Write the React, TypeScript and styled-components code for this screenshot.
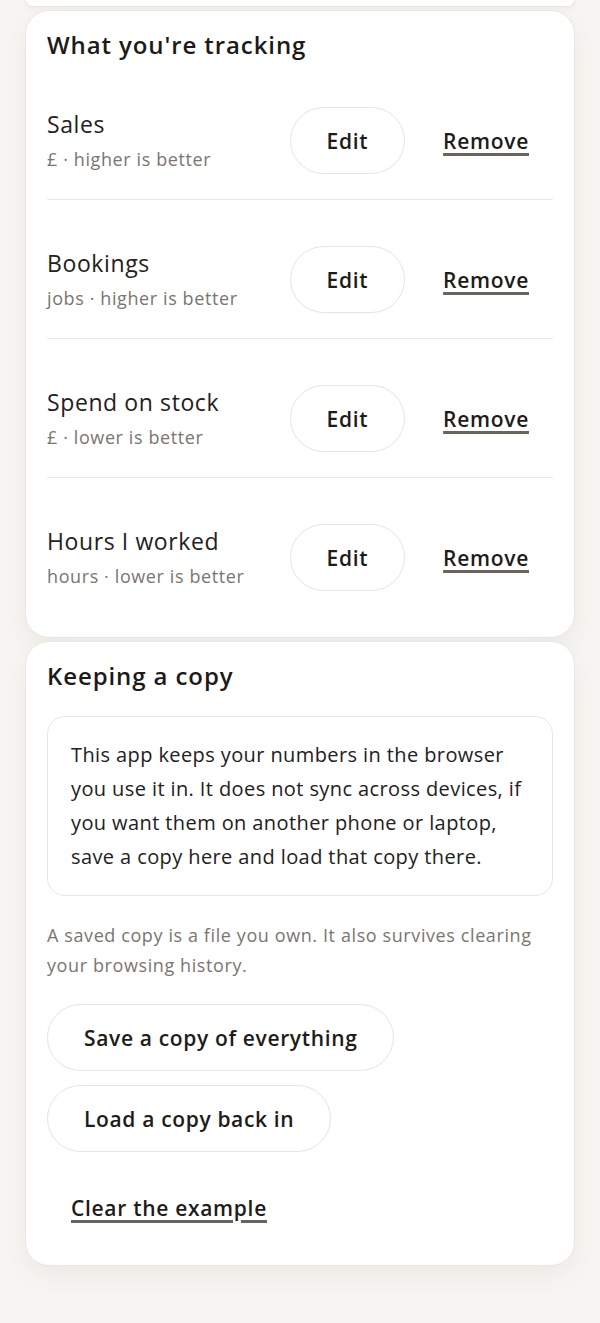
import React from 'react'
import styled, { createGlobalStyle } from 'styled-components'

const GlobalStyle = createGlobalStyle`
  html, body {
    margin: 0;
    padding: 0;
    background: #f7f5f2;
  }
  body {
    font-family: "Open Sans", "Noto Sans", "Liberation Sans", sans-serif;
    color: #221e1b;
    -webkit-font-smoothing: antialiased;
  }
  * { box-sizing: border-box; }
`

interface Metric {
  name: string
  unit: string
  better: string
}

const metrics: Metric[] = [
  { name: 'Sales', unit: '£', better: 'higher is better' },
  { name: 'Bookings', unit: 'jobs', better: 'higher is better' },
  { name: 'Spend on stock', unit: '£', better: 'lower is better' },
  { name: 'Hours I worked', unit: 'hours', better: 'lower is better' },
]

export default function App() {
  return (
    <>
      <GlobalStyle />
      <Page>
        <CardStub />
        <Card>
          <CardTitle>What you're tracking</CardTitle>
          {metrics.map((m, i) => (
            <MetricRow key={m.name} last={i === metrics.length - 1}>
              <MetricText>
                <MetricName>{m.name}</MetricName>
                <MetricMeta>
                  {m.unit} · {m.better}
                </MetricMeta>
              </MetricText>
              <PillButton>Edit</PillButton>
              <TextButton>Remove</TextButton>
            </MetricRow>
          ))}
        </Card>
        <Card bottom>
          <CardTitle>Keeping a copy</CardTitle>
          <InfoBox>
            This app keeps your numbers in the browser you use it in. It does
            not sync across devices, if you want them on another phone or
            laptop, save a copy here and load that copy there.
          </InfoBox>
          <Helper>
            A saved copy is a file you own. It also survives clearing your
            browsing history.
          </Helper>
          <ButtonStack>
            <PillButton>Save a copy of everything</PillButton>
            <PillButton>Load a copy back in</PillButton>
          </ButtonStack>
          <ClearRow>
            <TextButton>Clear the example</TextButton>
          </ClearRow>
        </Card>
      </Page>
    </>
  )
}

const Page = styled.div`
  min-height: 1323px;
  padding: 0 25px 58px;
  display: flex;
  flex-direction: column;
  gap: 3px;
`

const CardStub = styled.div`
  height: 7px;
  background: #fff;
  border: 1px solid #ece6e0;
  border-top: none;
  border-radius: 0 0 24px 24px;
  box-shadow: 0 2px 6px rgba(80, 60, 40, 0.05);
`

const Card = styled.section<{ bottom?: boolean }>`
  background: #fff;
  border: 1px solid #ece6e0;
  border-radius: 24px;
  padding: 18px 21px ${(p) => (p.bottom ? '24px' : '21px')};
  box-shadow: 0 10px 26px rgba(80, 60, 40, 0.06);
  display: flex;
  flex-direction: column;
`

const CardTitle = styled.h2`
  margin: 0;
  font-size: 24px;
  line-height: 32px;
  font-weight: 600;
  color: #1d1a17;
  letter-spacing: 0.9px;
`

const MetricRow = styled.div<{ last?: boolean }>`
  display: flex;
  align-items: center;
  gap: 14px;
  padding: 46px 0 25px;
  border-bottom: ${(p) => (p.last ? 'none' : '1px solid #ebe7e2')};
`

const MetricText = styled.div`
  flex: 1;
  display: flex;
  flex-direction: column;
  gap: 6px;
`

const MetricName = styled.div`
  font-size: 23px;
  line-height: 30px;
  font-weight: 400;
  color: #24201d;
  letter-spacing: 0.6px;
`

const MetricMeta = styled.div`
  font-size: 18px;
  line-height: 28px;
  color: #7b756f;
  letter-spacing: 0.6px;
`

const PillButton = styled.button`
  height: 67px;
  padding: 0 36px;
  border: 1.5px solid #e9e3dc;
  border-radius: 999px;
  background: #fff;
  font-family: inherit;
  font-size: 21px;
  font-weight: 600;
  color: #1f1b18;
  letter-spacing: 0.65px;
  cursor: pointer;
  white-space: nowrap;
`

const TextButton = styled.button`
  height: 67px;
  padding: 0 24px;
  border: none;
  background: transparent;
  font-family: inherit;
  font-size: 21px;
  font-weight: 600;
  color: #1f1b18;
  letter-spacing: 0.7px;
  text-decoration: underline;
  text-decoration-color: #6b645c;
  text-decoration-thickness: 3px;
  text-underline-offset: 4px;
  cursor: pointer;
  white-space: nowrap;
`

const InfoBox = styled.p`
  margin: 24px 0 0;
  padding: 21px 23px;
  border: 1.5px solid #ebe5df;
  border-radius: 18px;
  font-size: 20px;
  line-height: 34px;
  color: #24201d;
  letter-spacing: 0.4px;
`

const Helper = styled.p`
  margin: 24px 0 0;
  font-size: 18px;
  line-height: 30px;
  color: #7b756f;
  letter-spacing: 0.6px;
`

const ButtonStack = styled.div`
  margin-top: 24px;
  display: flex;
  flex-direction: column;
  align-items: flex-start;
  gap: 14px;
`

const ClearRow = styled.div`
  margin-top: 22px;
  display: flex;
`
